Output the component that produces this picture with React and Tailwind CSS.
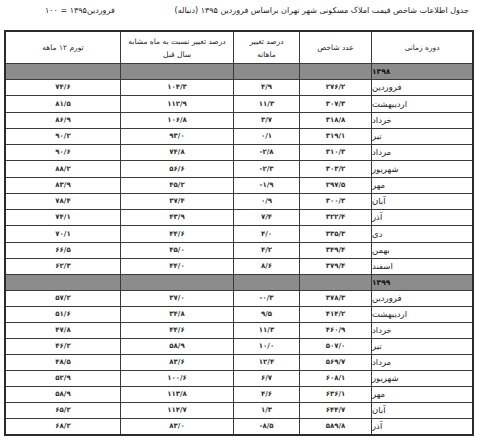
import React from "react";

const y98 = [
  ["فروردین", "۲۷۶/۲", "۴/۹", "۱۰۴/۳", "۷۴/۶"],
  ["اردیبهشت", "۳۰۷/۳", "۱۱/۳", "۱۱۲/۹", "۸۱/۵"],
  ["خرداد", "۳۱۸/۸", "۳/۷", "۱۰۶/۸", "۸۶/۹"],
  ["تیر", "۳۱۹/۱", "۰/۱", "۹۳/۰", "۹۰/۲"],
  ["مرداد", "۳۱۰/۳", "-۲/۸", "۷۴/۸", "۹۰/۶"],
  ["شهریور", "۳۰۳/۲", "-۲/۳", "۵۶/۶", "۸۸/۲"],
  ["مهر", "۲۹۷/۵", "-۱/۹", "۴۵/۲", "۸۳/۹"],
  ["آبان", "۳۰۰/۳", "۰/۹", "۳۷/۴", "۷۸/۴"],
  ["آذر", "۳۲۲/۴", "۷/۴", "۴۳/۹", "۷۴/۱"],
  ["دی", "۳۳۵/۳", "۴/۰", "۴۴/۶", "۷۰/۱"],
  ["بهمن", "۳۴۹/۴", "۴/۲", "۴۵/۰", "۶۶/۵"],
  ["اسفند", "۳۷۹/۴", "۸/۶", "۴۴/۰", "۶۲/۳"],
];

const y99 = [
  ["فروردین", "۳۷۸/۳", "-۰/۳", "۳۷/۰", "۵۷/۲"],
  ["اردیبهشت", "۴۱۴/۲", "۹/۵", "۳۴/۸", "۵۱/۶"],
  ["خرداد", "۴۶۰/۹", "۱۱/۳", "۴۴/۶", "۴۷/۸"],
  ["تیر", "۵۰۷/۰", "۱۰/۰", "۵۸/۹", "۴۶/۲"],
  ["مرداد", "۵۶۹/۷", "۱۲/۴", "۸۳/۶", "۴۸/۵"],
  ["شهریور", "۶۰۸/۱", "۶/۷", "۱۰۰/۶", "۵۲/۹"],
  ["مهر", "۶۳۶/۱", "۴/۶", "۱۱۳/۸", "۵۸/۹"],
  ["آبان", "۶۴۴/۷", "۱/۳", "۱۱۴/۷", "۶۵/۲"],
  ["آذر", "۵۸۹/۸", "-۸/۵", "۸۳/۰", "۶۸/۲"],
];

const font = { fontFamily: '"DejaVu Sans", "Noto Sans", sans-serif' };

function Num({ v }) {
  return (
    <div className="flex items-center justify-center border-r border-[#3a3a3a] text-[7px] font-bold text-[#333]" dir="ltr">
      {v}
    </div>
  );
}

function Row({ r, h }) {
  return (
    <div className={`grid grid-cols-[115px_113px_66px_72px_100px] border-b border-[#3a3a3a] ${h}`}>
      <Num v={r[4]} />
      <Num v={r[3]} />
      <Num v={r[2]} />
      <Num v={r[1]} />
      <div className="flex items-center justify-end pr-[3px] text-[8.5px] text-[#1f1f1f]" dir="rtl">
        {r[0]}
      </div>
    </div>
  );
}

function YearRow({ y }) {
  return (
    <div className="grid h-[16px] grid-cols-[115px_113px_66px_72px_100px] border-b border-[#3a3a3a] bg-[#8c8c8c]">
      <div className="border-r border-[#3a3a3a]" />
      <div className="border-r border-[#3a3a3a]" />
      <div className="border-r border-[#3a3a3a]" />
      <div className="border-r border-[#3a3a3a]" />
      <div className="flex items-center justify-end pr-[3px] text-[7.5px] font-bold text-[#111]" dir="rtl">
        {y}
      </div>
    </div>
  );
}

function Head({ children, last }) {
  return (
    <div
      className={`flex flex-col items-center justify-center text-center text-[7.5px] leading-[13px] text-[#2a2a2a] ${last ? "" : "border-r border-[#3a3a3a]"}`}
      dir="rtl"
    >
      {children}
    </div>
  );
}

export default function App() {
  return (
    <div className="h-[440px] w-[480px] overflow-hidden bg-white" style={font}>
      <div className="flex h-[30px] items-start justify-between whitespace-nowrap pl-[45px] pr-[11px] pt-[4px]" dir="rtl">
        <div className="text-[8px] leading-[13px] text-[#1a1a1a]">
          جدول اطلاعات شاخص قیمت املاک مسکونی شهر تهران براساس فروردین ۱۳۹۵ (دنباله)
        </div>
        <div className="text-[8px] leading-[13px] text-[#1a1a1a]">
          فروردین۱۳۹۵ = ۱۰۰
        </div>
      </div>
      <div className="ml-[4px] w-[470px] border-2 border-[#2a2a2a]">
        <div className="grid h-[32px] grid-cols-[115px_113px_66px_72px_100px] border-b border-[#3a3a3a]">
          <Head>تورم ۱۲ ماهه</Head>
          <Head>
            <span>درصد تغییر نسبت به ماه مشابه</span>
            <span>سال قبل</span>
          </Head>
          <Head>
            <span>درصد تغییر</span>
            <span>ماهانه</span>
          </Head>
          <Head>عدد شاخص</Head>
          <Head last>دوره زمانی</Head>
        </div>
        <YearRow y="۱۳۹۸" />
        {y98.map((r, i) => (
          <Row key={"a" + i} r={r} h="h-[16.25px]" />
        ))}
        <YearRow y="۱۳۹۹" />
        {y99.map((r, i) => (
          <Row key={"b" + i} r={r} h={i === 8 ? "h-[15px] border-b-0" : "h-[16px]"} />
        ))}
      </div>
    </div>
  );
}
